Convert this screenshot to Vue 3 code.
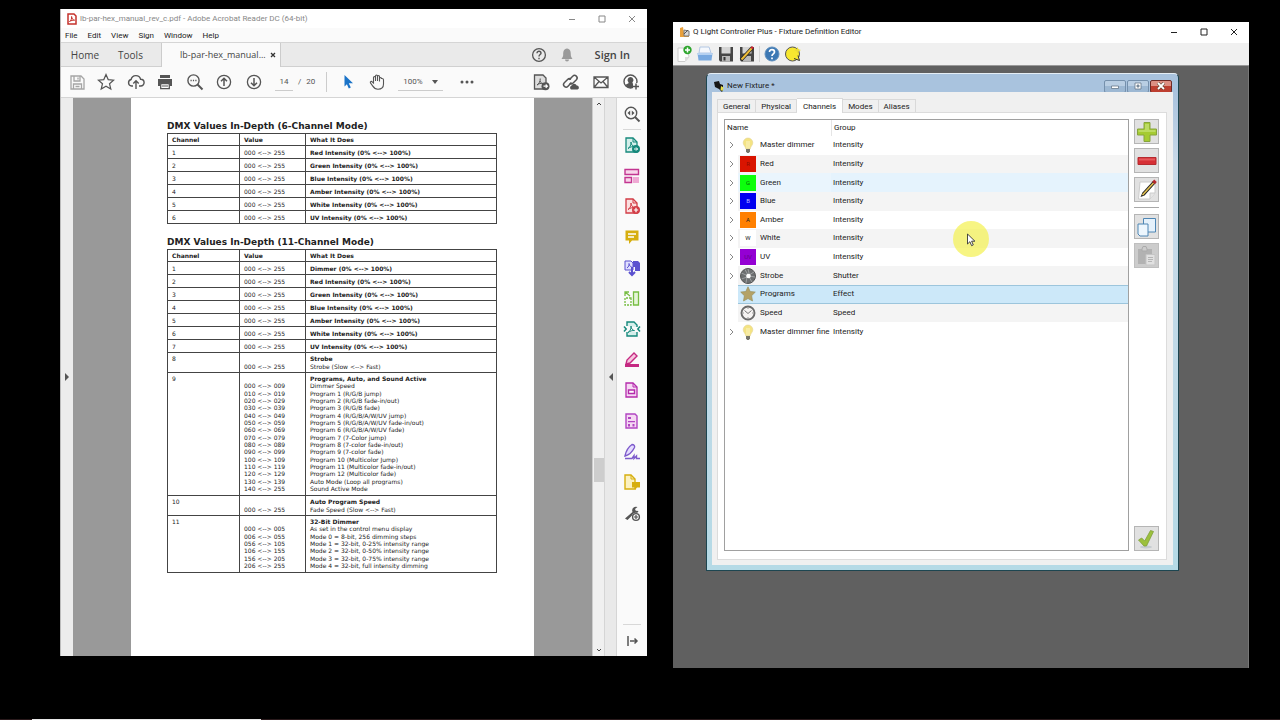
<script setup>
import { ref } from 'vue'

const page = ref('14')
const zoomLevel = ref('100%')
const menus = ['File', 'Edit', 'View', 'Sign', 'Window', 'Help']

const sixChannel = ['Red', 'Green', 'Blue', 'Amber', 'White', 'UV'].map((c, i) => ({
  n: i + 1,
  value: '000 <--> 255',
  text: `${c} Intensity (0% <--> 100%)`,
}))

const elevenChannel = ['Dimmer', 'Red Intensity', 'Green Intensity', 'Blue Intensity', 'Amber Intensity', 'White Intensity', 'UV Intensity'].map((c, i) => ({
  n: i + 1,
  value: '000 <--> 255',
  text: `${c} (0% <--> 100%)`,
}))

const detailed = [
  { n: 8, size: 'two', title: 'Strobe', lines: [['000 <--> 255', 'Strobe (Slow <--> Fast)']] },
  {
    n: 9,
    size: 'sixteen',
    title: 'Programs, Auto, and Sound Active',
    lines: [
      ['000 <--> 009', 'Dimmer Speed'],
      ['010 <--> 019', 'Program 1 (R/G/B jump)'],
      ['020 <--> 029', 'Program 2 (R/G/B fade-in/out)'],
      ['030 <--> 039', 'Program 3 (R/G/B fade)'],
      ['040 <--> 049', 'Program 4 (R/G/B/A/W/UV jump)'],
      ['050 <--> 059', 'Program 5 (R/G/B/A/W/UV fade-in/out)'],
      ['060 <--> 069', 'Program 6 (R/G/B/A/W/UV fade)'],
      ['070 <--> 079', 'Program 7 (7-Color jump)'],
      ['080 <--> 089', 'Program 8 (7-color fade-in/out)'],
      ['090 <--> 099', 'Program 9 (7-color fade)'],
      ['100 <--> 109', 'Program 10 (Multicolor Jump)'],
      ['110 <--> 119', 'Program 11 (Multicolor fade-in/out)'],
      ['120 <--> 129', 'Program 12 (Multicolor fade)'],
      ['130 <--> 139', 'Auto Mode (Loop all programs)'],
      ['140 <--> 255', 'Sound Active Mode'],
    ],
  },
  { n: 10, size: 'two', title: 'Auto Program Speed', lines: [['000 <--> 255', 'Fade Speed (Slow <--> Fast)']] },
  {
    n: 11,
    size: 'seven',
    title: '32-Bit Dimmer',
    lines: [
      ['000 <--> 005', 'As set in the control menu display'],
      ['006 <--> 055', 'Mode 0 = 8-bit, 256 dimming steps'],
      ['056 <--> 105', 'Mode 1 = 32-bit, 0-25% intensity range'],
      ['106 <--> 155', 'Mode 2 = 32-bit, 0-50% intensity range'],
      ['156 <--> 205', 'Mode 3 = 32-bit, 0-75% intensity range'],
      ['206 <--> 255', 'Mode 4 = 32-bit, full intensity dimming'],
    ],
  },
]

const fileTools = [
  { label: 'Save', art: '<g fill="none" stroke="#a5a5a5" stroke-width="1.3"><path d="M3 3h10l3 3v10H3z"/><path d="M6 3v5h6V3M5.500 16v-5h8v5M10 4.500v2M7.500 13.500h4"/></g>' },
  { label: 'Star', art: '<path d="M9 1.600l2.200 5 5.400.5-4.100 3.600 1.300 5.400L9 13.300l-4.800 2.800 1.300-5.400L1.400 7.100l5.400-.5z" fill="none" stroke="#555" stroke-width="1.200"/>' },
  { label: 'Upload', art: '<path d="M6 13H4.600a3.300 3.300 0 0 1-.5-6.500 4.900 4.900 0 0 1 9.500-.3 3.400 3.400 0 0 1 .2 6.800H12M9 16V8M6.300 10.500L9 7.800l2.700 2.700" fill="none" stroke="#555" stroke-width="1.400"/>' },
  { label: 'Print', art: '<g fill="#555"><path d="M4 2h10v3H4zM2 6h14v7h-2v-3H4v3H2z"/><path d="M4.700 10.700h8.600v5H4.700z" fill="#fff" stroke="#555" stroke-width="1.300"/><path d="M6 12.500h6v1H6z"/></g>' },
  { label: 'Find', art: '<circle cx="7.500" cy="7.500" r="5.600" fill="none" stroke="#555" stroke-width="1.400"/><path d="M11.500 11.500l5 5" stroke="#555" stroke-width="2"/><path d="M4.500 7.500h1.200m1.200 0h1.200m1.200 0h1.200" stroke="#555" stroke-width="1.300"/>' },
  { label: 'Previous page', art: '<circle cx="9" cy="9" r="6.600" fill="none" stroke="#555" stroke-width="1.300"/><path d="M9 13V5.500M6 8.300l3-3 3 3" fill="none" stroke="#555" stroke-width="1.500"/>' },
  { label: 'Next page', art: '<circle cx="9" cy="9" r="6.600" fill="none" stroke="#555" stroke-width="1.300"/><path d="M9 5v7.500M6 9.700l3 3 3-3" fill="none" stroke="#555" stroke-width="1.500"/>' },
]

const shareTools = [
  { label: 'Convert PDF', art: '<path d="M2.500 2h8.500l3 3v11H2.500z" fill="#ddd" stroke="#555" stroke-width="1.300"/><path d="M5 12c2-1 3.500-4 3.200-6.500M8 8c.8 2 2 2.800 4 2.800M5 12c1.500-1.300 4-2 6-1.600" fill="none" stroke="#555"/><circle cx="13.500" cy="13.200" r="4" fill="#555"/><path d="M11.500 13.200h3.600M13.700 11.500l1.700 1.700-1.700 1.700" fill="none" stroke="#fff" stroke-width="1.200"/>' },
  { label: 'Share link', art: '<g fill="none" stroke="#555" stroke-width="1.500"><path d="M7.200 6.800l3.500-3.600a2.500 2.500 0 0 1 3.700 3.500l-3.300 3.300a2.500 2.500 0 0 1-3.400.1"/><path d="M9.500 9.600L6 13.300a2.500 2.500 0 0 1-3.700-3.500l3.300-3.300a2.500 2.500 0 0 1 3.400-.1"/></g><path d="M9 16.500a2.200 2.200 0 0 1 .6-3.900 2.700 2.700 0 0 1 5.100 0 2 2 0 0 1 .8 3.900z" fill="#555"/>' },
  { label: 'Email', art: '<path d="M2 4h14v10.500H2zM2 4l7 6 7-6M2 14.500l5-6M16 14.500l-5-6" fill="none" stroke="#555" stroke-width="1.300"/>' },
  { label: 'Add people', art: '<circle cx="8.500" cy="8.500" r="6.500" fill="#fff" stroke="#555" stroke-width="1.400"/><path d="M8.500 4a3 3 0 0 1 2 5.200v1l3 1.500-2 2.500c-2 1-4.500 1-6.300-.2l-1.700-2.200 3-1.600v-1A3 3 0 0 1 8.500 4z" fill="#555"/><path d="M11 10h6v7h-6z" fill="#fafafa"/><path d="M14 10.500v6M11 13.500h6" stroke="#555" stroke-width="1.500"/>' },
]

const sheet = (c, f) => `<path d="M3 2h7l4 4v10H3z" fill="${f}" stroke="${c}" stroke-width="1.300"/><path d="M10 2v4h4" fill="none" stroke="${c}"/>`
const acro = (c) => `<path d="M5 12.500c1.700-.8 3.300-3.500 3-6.500.3 2.700 1.300 4.300 3.500 4.600-2-.3-4.500.4-6.500 1.900z" fill="none" stroke="${c}"/>`
const paneTools = [
  { label: 'Export PDF', art: sheet('#16897c', '#d5efeb') + acro('#16897c') + '<circle cx="13" cy="13" r="4" fill="#16897c"/><path d="M11 13h3.500M13 11.400l1.600 1.600-1.600 1.600" fill="none" stroke="#fff"/>' },
  { label: 'Organize pages', art: '<g fill="#f8d5ea" stroke="#c33591" stroke-width="1.400"><path d="M2 2.500h13.500v5H2zM2 10.500h6.500v5H2z"/></g><path d="M10 10h6v6h-6z" fill="#efa9d4"/>' },
  { label: 'Create PDF', art: sheet('#d23c46', '#fbe0e0') + acro('#d23c46') + '<circle cx="13" cy="13" r="4" fill="#d23c46"/><path d="M13 10.800v4.400M10.800 13h4.400" stroke="#fff" stroke-width="1.200"/>' },
  { label: 'Comment', art: '<path d="M2.500 2.500h13v10H9l-3 3.500v-3.500H2.500z" fill="#d6ae0f"/><path d="M5 6h8M5 9h6" stroke="#fff" stroke-width="1.400"/>' },
  { label: 'Combine files', art: '<path d="M2 2h6l2 2v7H2z" fill="#e1e0ff" stroke="#5b51cf"/><path d="M4 9c1.500-1 2.500-3 2-4.500.3 2 1 3 2.500 3.200" fill="none" stroke="#5b51cf"/><path d="M10 2h5l2 2v8h-5V8h-2z" fill="#5b51cf"/><path d="M9 8v7M6 13l3 3 3-3" fill="none" stroke="#5b51cf" stroke-width="2"/>' },
  { label: 'Edit PDF', art: '<g fill="none" stroke="#77bd43" stroke-width="1.300"><path d="M10.500 3h5v13h-5z" fill="#e5f5d8"/><path d="M8 9H2v7h6z" stroke-dasharray="2 1"/><path d="M2 7V3h4M2 3l5 4"/></g>' },
  { label: 'Compress PDF', art: '<path d="M4 6V2h7l3 3v2M4 12v4h10v-4" fill="#d5efeb" stroke="#16897c" stroke-width="1.400"/>' + acro('#16897c') + '<path d="M1 6.500L3.200 9 1 11.500M17 6.500L14.800 9l2.200 2.500" fill="none" stroke="#16897c" stroke-width="1.500"/>' },
  { label: 'Fill and sign', art: '<path d="M3 13l1-4 7-7 3 3-7 7z" fill="#f8c5df" stroke="#c52a82" stroke-width="1.400"/><path d="M2 13h14v3H2z" fill="#c52a82"/>' },
  { label: 'Redact', art: sheet('#b52bac', '#f5d8f3') + '<path d="M5.500 9h6v3.500h-6z" fill="#fff" stroke="#b52bac" stroke-width="1.400"/>' },
  { label: 'Prepare form', art: '<path d="M3 2h9l2 2v12H3z" fill="#f5d8f3" stroke="#b145c2" stroke-width="1.400"/><path d="M5 5h3v2H5zM5 9h7v1.200H5zM5 12h2v2.500H5zM9.500 12h2v2.500h-2z" fill="#b145c2"/>' },
  { label: 'Certificates', art: '<path d="M2 13c1-5 4-9.500 7-11.500 2 0 3 1.500 2.500 3C9.500 8.500 6 12 2 13z" fill="#e5dcff" stroke="#7d5acb" stroke-width="1.400"/><path d="M2 15.500h7l2-3v3l2.500-2.500v2.500H17" fill="none" stroke="#7d5acb" stroke-width="1.400"/>' },
  { label: 'Send for comments', art: '<path d="M2 2h6l4 4v10H2z" fill="#fbf1c1" stroke="#d6ae0f" stroke-width="1.400"/><path d="M8 2v4h4" fill="none" stroke="#d6ae0f"/><path d="M9 9h8v5.500h-3L12 17v-2.500H9z" fill="#d6ae0f"/>' },
  { label: 'More tools', art: '<path d="M2 14.500L9.500 8a3.800 3.800 0 0 1 5-5L12 5l.8 1.800L15.500 7c-.7 2-2.500 3-4.500 2.500L4.500 16z" fill="#555"/><circle cx="13" cy="13" r="4.300" fill="#fafafa"/><circle cx="13" cy="13" r="3.400" fill="none" stroke="#555" stroke-width="1.400"/><path d="M13 11v4M11 13h4" stroke="#555" stroke-width="1.200"/>' },
]

const editorTabs = ['General', 'Physical', 'Channels', 'Modes', 'Aliases']
const activeTab = ref('Channels')

const channels = [
  { name: 'Master dimmer', group: 'Intensity', icon: 'bulb', tree: true },
  { name: 'Red', group: 'Intensity', icon: 'swatch', letter: 'R', tone: 'red', tree: true },
  { name: 'Green', group: 'Intensity', icon: 'swatch', letter: 'G', tone: 'green', tree: true, state: 'hover' },
  { name: 'Blue', group: 'Intensity', icon: 'swatch', letter: 'B', tone: 'blue', tree: true },
  { name: 'Amber', group: 'Intensity', icon: 'swatch', letter: 'A', tone: 'amber', tree: true },
  { name: 'White', group: 'Intensity', icon: 'swatch', letter: 'W', tone: 'white', tree: true },
  { name: 'UV', group: 'Intensity', icon: 'swatch', letter: 'UV', tone: 'uv', tree: true },
  { name: 'Strobe', group: 'Shutter', icon: 'shutter', tree: true },
  { name: 'Programs', group: 'Effect', icon: 'star', state: 'selected' },
  { name: 'Speed', group: 'Speed', icon: 'clock' },
  { name: 'Master dimmer fine', group: 'Intensity', icon: 'bulb', tree: true },
]
</script>

<template>
  <div class="screen">
    <main class="desktop">
      <section class="reader" aria-label="Adobe Acrobat Reader">
        <header class="titlebar">
          <svg class="app-icon" viewBox="0 0 10 12"><path d="M1 1h6l2 2v8H1z" fill="#fff" stroke="#c5322c" stroke-width="1.500" /><path d="M2.500 8.500C4 7.500 5 5.500 4.600 3.500c.2 2 1 3.500 3 3.700-1.600-.2-3.500.3-5.100 1.300z" fill="none" stroke="#c5322c" /></svg>
          <h1 class="caption">lb-par-hex_manual_rev_c.pdf - Adobe Acrobat Reader DC (64-bit)</h1>
          <div class="win-buttons">
            <button aria-label="Minimize"><svg viewBox="0 0 8 8"><path d="M1 4.500h6" /></svg></button>
            <button aria-label="Maximize"><svg viewBox="0 0 8 8"><path d="M1 1h6v6H1z" /></svg></button>
            <button aria-label="Close"><svg viewBox="0 0 8 8"><path d="M1 1l6 6M7 1L1 7" /></svg></button>
          </div>
        </header>
        <nav class="menubar"><button v-for="m in menus" :key="m">{{ m }}</button></nav>
        <div class="tabbar">
          <button class="main-tab">Home</button>
          <button class="main-tab">Tools</button>
          <div class="doc-tab"><button>lb-par-hex_manual...</button><button class="tab-close" aria-label="Close tab"><svg viewBox="0 0 6 6"><path d="M1 1l4 4M5 1L1 5" /></svg></button></div>
          <div class="account">
            <button aria-label="Help"><svg viewBox="0 0 18 18"><circle cx="9" cy="9" r="6.400" fill="none" stroke="#555" stroke-width="1.300" /><path d="M7 7.200c0-2.600 4-2.500 4 0C11 8.600 9 8.600 9 10.400M9 11.800v1.400" fill="none" stroke="#555" stroke-width="1.400" /></svg></button>
            <button aria-label="Notifications"><svg viewBox="0 0 18 18"><path d="M9 2.500c3.200.5 3.800 2.500 3.800 6 0 2 .5 2.800 1.700 4.500h-11c1.200-1.700 1.700-2.500 1.700-4.500 0-3.500.6-5.500 3.800-6zM7 13.600h4a2 2 0 0 1-4 0z" fill="#9a9a9a" /></svg></button>
            <button class="sign-in">Sign In</button>
          </div>
        </div>
        <div class="toolbar">
          <div class="file-tools">
            <button v-for="t in fileTools" :key="t.label" :aria-label="t.label"><svg viewBox="0 0 18 18" v-html="t.art" /></button>
          </div>
          <div class="pager">
            <input v-model="page" aria-label="Page number" /><span>/</span><span>20</span>
          </div>
          <div class="view-tools">
            <button aria-label="Select"><svg viewBox="0 0 18 18"><path d="M5.500 2l8.500 8.300H9.800l2 4.200-2 .9-1.900-4.200L5.500 13.500z" fill="#1a73c8" /></svg></button>
            <button aria-label="Hand"><svg viewBox="0 0 18 18"><path d="M5.500 10V4.500c0-1.300 2-1.300 2 0V8 3c0-1.300 2-1.300 2 0v5-4.500c0-1.300 2-1.300 2 0V8.500 5.500c0-1.300 2-1.300 2 0l.5 0c1 0 1.500.4 1.500 1.300V11c0 3.300-2 5.200-5.500 5.200-3 0-4-1-5.400-3.300L2.400 9.800C2 8.500 3.500 8 4.200 8.900z" fill="none" stroke="#555" stroke-width="1.100" /></svg></button>
          </div>
          <label class="zoom"><select v-model="zoomLevel" aria-label="Zoom level"><option>100%</option></select><svg viewBox="0 0 6 4"><path d="M0 0h6L3 4z" fill="#555" /></svg></label>
          <button class="more" aria-label="More"><svg viewBox="0 0 14 4"><circle cx="2" cy="2" r="1.500" /><circle cx="7" cy="2" r="1.500" /><circle cx="12" cy="2" r="1.500" /></svg></button>
          <div class="share-tools">
            <button v-for="t in shareTools" :key="t.label" :aria-label="t.label"><svg viewBox="0 0 18 18" v-html="t.art" /></button>
          </div>
        </div>
        <div class="workspace">
          <button class="side-strip left" aria-label="Show navigation pane"><svg viewBox="0 0 4 8"><path d="M0 0l4 4-4 4z" /></svg></button>
          <div class="canvas">
            <article class="sheet">
              <h2>DMX Values In-Depth (6-Channel Mode)</h2>
              <table class="dmx">
                <thead><tr><th class="c1">Channel</th><th class="c2">Value</th><th>What It Does</th></tr></thead>
                <tbody>
                  <tr v-for="r in sixChannel" :key="r.n"><td>{{ r.n }}</td><td>{{ r.value }}</td><td><b>{{ r.text }}</b></td></tr>
                </tbody>
              </table>
              <h2>DMX Values In-Depth (11-Channel Mode)</h2>
              <table class="dmx">
                <thead><tr><th class="c1">Channel</th><th class="c2">Value</th><th>What It Does</th></tr></thead>
                <tbody>
                  <tr v-for="r in elevenChannel" :key="r.n"><td>{{ r.n }}</td><td>{{ r.value }}</td><td><b>{{ r.text }}</b></td></tr>
                  <tr v-for="r in detailed" :key="r.n" class="detail">
                    <td>{{ r.n }}</td>
                    <td><div class="lines" :class="r.size"><span class="blank"></span><span v-for="l in r.lines" :key="l[0]">{{ l[0] }}</span></div></td>
                    <td><div class="lines" :class="r.size"><b>{{ r.title }}</b><span v-for="l in r.lines" :key="l[0]">{{ l[1] }}</span></div></td>
                  </tr>
                </tbody>
              </table>
            </article>
          </div>
          <div class="scrollbar">
            <svg viewBox="0 0 6 4"><path d="M1 3l2-2 2 2" /></svg>
            <div class="thumb"></div>
            <svg viewBox="0 0 6 4"><path d="M1 1l2 2 2-2" /></svg>
          </div>
          <button class="side-strip right" aria-label="Hide tools pane"><svg viewBox="0 0 4 8"><path d="M4 0L0 4l4 4z" /></svg></button>
          <aside class="pane">
            <button aria-label="Search tools"><svg viewBox="0 0 18 18"><circle cx="8" cy="8" r="5.700" fill="none" stroke="#555" stroke-width="1.400" /><path d="M12 12l4.500 4.500" stroke="#555" stroke-width="2" /><path d="M7.200 5.500v5L4.500 8zM8.800 5.500v5L11.500 8z" fill="#555" /></svg></button>
            <hr />
            <div class="pane-list">
              <button v-for="t in paneTools" :key="t.label" :aria-label="t.label"><svg viewBox="0 0 18 18" v-html="t.art" /></button>
            </div>
            <hr class="low" />
            <button aria-label="Collapse pane"><svg viewBox="0 0 18 18"><path d="M5 4v10M7 9h7M11.500 6.500L14 9l-2.500 2.500" fill="none" stroke="#555" stroke-width="1.500" /></svg></button>
          </aside>
        </div>
      </section>

      <section class="editor" aria-label="Fixture Definition Editor">
        <header class="titlebar dark">
          <svg class="app-icon wide" viewBox="0 0 12 12"><path d="M1 2l3-1 1 6 5 1v3H1z" fill="#e9a03a" /><path d="M5 4l5 1v5H5z" fill="#d8d8d8" stroke="#777" /><path d="M5 8l4-4" stroke="#555" /></svg>
          <h1 class="caption">Q Light Controller Plus - Fixture Definition Editor</h1>
          <div class="win-buttons">
            <button aria-label="Minimize"><svg viewBox="0 0 8 8"><path d="M1 4.500h6" /></svg></button>
            <button aria-label="Maximize"><svg viewBox="0 0 8 8"><path d="M1 1h6v6H1z" /></svg></button>
            <button aria-label="Close"><svg viewBox="0 0 8 8"><path d="M1 1l6 6M7 1L1 7" /></svg></button>
          </div>
        </header>
        <div class="quickbar">
          <button aria-label="New"><svg viewBox="0 0 18 18"><path d="M3 3h9l2 9-4 4.500H3z" fill="#fdfdfd" stroke="#ccc" /><path d="M14 12l-4 4.500V12z" fill="#ddd" /><circle cx="12.500" cy="5" r="4.200" fill="#2da52d" /><path d="M12.500 2.500v5M10 5h5" stroke="#fff" stroke-width="1.500" /></svg></button>
          <button aria-label="Open"><svg viewBox="0 0 18 18"><path d="M4 2h9l2 6H3z" fill="#f5f8fd" stroke="#b4c8e4" /><path d="M1.500 8h15l-1 7.500h-13z" fill="#79a9e0" /><path d="M2 8h14v2H2z" fill="#b6d1f1" /></svg></button>
          <button aria-label="Save"><svg viewBox="0 0 18 18"><path d="M2 2h14v14.500H3L2 15z" fill="#454545" /><path d="M4.500 2h9v6.500h-9z" fill="#d5d5d5" /><path d="M5 11h8v5.500H5z" fill="#b9b9b9" /><path d="M6.500 12h2v3.500h-2z" fill="#333" /></svg></button>
          <button aria-label="Save as"><svg viewBox="0 0 18 18"><path d="M2 2h14v14.500H3L2 15z" fill="#454545" /><path d="M4.500 2h9v6.500h-9z" fill="#d5d5d5" /><path d="M5 11h8v5.500H5z" fill="#b9b9b9" /><path d="M3 15L14.500 2.500" stroke="#222" stroke-width="3.400" /><path d="M3.500 14.500L14 3" stroke="#edbb36" stroke-width="2" /><path d="M13.500 3.500l1.500-1.700" stroke="#c23" stroke-width="2.500" /></svg></button>
          <span class="sep"></span>
          <button aria-label="Help"><svg viewBox="0 0 18 18"><circle cx="9" cy="9" r="7" fill="#3c78b4" stroke="#5f8fbd" /><path d="M6.500 7c0-3.300 5-3.200 5 0C11.500 8.900 9 8.800 9 11M9 12.500v1.700" fill="none" stroke="#fff" stroke-width="1.700" /></svg></button>
          <button aria-label="Colour"><svg viewBox="0 0 18 18"><circle cx="8.500" cy="9" r="7" fill="#f7e72f" stroke="#555" stroke-width="1" /><path d="M10 13.500l5.500 2-1.500-5" fill="#f7e72f" stroke="#333" /><path d="M13.500 2l1 2.200 2.500.8-2.500 1.200-1 2.300-1-2.300L10 5l2.500-.8z" fill="#eadb36" /></svg></button>
        </div>
        <div class="mdi">
          <section class="fixture" aria-label="New Fixture">
            <header class="fix-title">
              <svg class="app-icon wide" viewBox="0 0 12 12"><path d="M1 2l5-1 1 3 3 1v5L9 12 6 9 2 7z" fill="#161616" /><path d="M8 6l2.500 1.500-1 3.500-2-1z" fill="#e8e24a" /></svg>
              <h2>New Fixture *</h2>
              <div class="aero">
                <button aria-label="Minimize"><svg viewBox="0 0 10 8"><path d="M1.500 4h7v2.500h-7z" fill="#fff" stroke="#678" stroke-width=".8" /></svg></button>
                <button aria-label="Restore"><svg viewBox="0 0 10 8"><path d="M2 1h6v6H2z" fill="#fff" stroke="#678" stroke-width=".8" /><path d="M4 3h2v2H4z" fill="#9ab" stroke="#678" stroke-width=".8" /></svg></button>
                <button class="close" aria-label="Close"><svg viewBox="0 0 10 8"><path d="M2 1l6 6M8 1L2 7" stroke="#543" stroke-width="3" /><path d="M2 1l6 6M8 1L2 7" stroke="#fff" stroke-width="1.800" /></svg></button>
              </div>
            </header>
            <div class="client">
              <div class="tabs" role="tablist">
                <button v-for="t in editorTabs" :key="t" role="tab" :aria-selected="t === activeTab" :class="{ active: t === activeTab }" @click="activeTab = t">{{ t }}</button>
              </div>
              <div class="tab-page">
                <div class="list">
                  <table class="channels">
                    <thead><tr><th>Name</th><th class="group-head">Group</th></tr></thead>
                    <tbody>
                      <tr v-for="c in channels" :key="c.name" :class="c.state">
                        <td class="name">
                          <span class="twist"><svg v-if="c.tree" viewBox="0 0 5 8"><path d="M1 1l3 3-3 3" /></svg></span>
                          <span class="cell">
                            <svg v-if="c.icon === 'bulb'" class="pic" viewBox="0 0 16 16"><path d="M8 1a4.800 4.800 0 0 1 4.800 4.800c0 2.500-2.300 3.500-2.500 6H5.700c-.2-2.500-2.500-3.500-2.500-6A4.800 4.800 0 0 1 8 1z" fill="#f4e382" stroke="#e3d493" stroke-width=".6" /><path d="M7 4v7M9 4v7" stroke="#fbf4c4" /><path d="M6 12h4v2.500L8.800 16H7.200L6 14.500z" fill="#77766c" /></svg>
                            <svg v-else-if="c.icon === 'shutter'" class="pic" viewBox="0 0 16 16"><circle cx="8" cy="8" r="7.500" fill="#6c6f70" stroke="#555" /><g stroke="#a9acad" stroke-width=".8"><path d="M8 1l1.500 6M14 4l-5 3M15 9l-6-1M12 14l-3-5M6 15l1-6M1.500 11L7 9M1.500 5L7 7.500M5 1.500L8 7" /></g><circle cx="8.500" cy="8" r="2.300" fill="#fff" /></svg>
                            <svg v-else-if="c.icon === 'star'" class="pic" viewBox="0 0 16 16"><path d="M8 .8l2.200 4.700 5.100.6-3.700 3.600.9 5.300L8 12.500 3.500 15l.9-5.300L.7 6.100l5.100-.6z" fill="#b4a266" stroke="#99905f" stroke-width=".7" /></svg>
                            <svg v-else-if="c.icon === 'clock'" class="pic" viewBox="0 0 16 16"><circle cx="8" cy="8" r="6.500" fill="#f5f3f2" stroke="#6b6b6b" stroke-width="1.900" /><path d="M4.500 5.500L8 8.500l3.500-3" fill="none" stroke="#777" /><path d="M8 3v1M8 12v1M3 8h1M12 8h1" stroke="#999" /></svg>
                            <i v-else class="pic swatch" :class="c.tone">{{ c.letter }}</i>
                            {{ c.name }}
                          </span>
                        </td>
                        <td class="group">{{ c.group }}</td>
                      </tr>
                    </tbody>
                  </table>
                  <div class="pointer"><svg viewBox="0 0 10 14"><path d="M1.500 1v10l2.400-2.300 1.700 4 1.700-.8-1.700-3.700h3.300z" fill="#fff" stroke="#333" stroke-width=".9" /></svg></div>
                </div>
                <div class="actions">
                  <button aria-label="Add channel"><svg viewBox="0 0 22 22"><path d="M8 1.500h6V8h6.500v6H14v6.500H8V14H1.500V8H8z" fill="#a5cb32" stroke="#86a43c" /><path d="M9 3h4v6h6.500v2H2.500V9H9z" fill="#bcdb62" /></svg></button>
                  <button aria-label="Remove channel"><svg viewBox="0 0 22 22"><path d="M2 7.500h18v7H2z" fill="#d62f35" stroke="#b52a2f" /><path d="M3 8.500h16v2H3z" fill="#e5585b" /></svg></button>
                  <button aria-label="Edit channel"><svg viewBox="0 0 22 22"><path d="M4 3h15v11l-5 6H2.500z" fill="#fff" stroke="#ccc" /><path d="M14 20v-6h5" fill="#e5e5e5" stroke="#ccc" /><path d="M4.500 18l2-4.500L17 2l2.500 2.300L8.500 16.500z" fill="#222" /><path d="M6.500 16L17.500 4" stroke="#e5c250" stroke-width="1.600" /><path d="M17.500 4l2-2.200" stroke="#b5272d" stroke-width="3.500" /></svg></button>
                  <hr />
                  <button aria-label="Copy channel"><svg viewBox="0 0 22 22"><path d="M7.500 2.500h12V16H9l-1.500-1.500z" fill="#e5f1fb" stroke="#4e86b4" /><path d="M2 8h10v12H4l-2-2z" fill="#edf6fd" stroke="#4e86b4" /></svg></button>
                  <button class="disabled" aria-label="Paste channel" disabled><svg viewBox="0 0 22 22"><path d="M2 4h14v15H2z" fill="#b2b2b2" /><path d="M6 4l1-2.500h3L11 4v2H6z" fill="#ccc" stroke="#aaa" /><path d="M10 9.500h9v10.500h-9z" fill="#e1e1e1" stroke="#c5c5c5" /><path d="M12 12.500h5M12 14.500h5M12 16.500h4" stroke="#b5b5b5" /></svg></button>
                  <button class="confirm" aria-label="Confirm"><svg viewBox="0 0 22 22"><ellipse cx="10" cy="19" rx="6" ry="1.500" fill="#c5cbd0" /><path d="M2.500 12l3.200-2 3 3L14.500 2.500l3 1L10.500 18H8z" fill="#9cc03c" stroke="#7f9f3a" stroke-width=".8" /></svg></button>
                </div>
              </div>
            </div>
          </section>
        </div>
      </section>
    </main>
    <footer class="timeline"><span class="played"></span></footer>
  </div>
</template>

<style>
html, body { margin: 0; background: #000; }
</style>

<style scoped>
* { box-sizing: border-box; }
button, input, select { font: inherit; color: inherit; border: 0; background: none; padding: 0; margin: 0; border-radius: 0; outline: 0; }
button { display: flex; align-items: center; justify-content: center; white-space: nowrap; }
h1, h2 { margin: 0; font-weight: 400; }
hr { border: 0; margin: 0; }
svg { display: block; flex: none; }

.screen { min-height: 100vh; display: flex; flex-direction: column; background: #000; font: 8px/12px Roboto, "Noto Sans", sans-serif; color: #222; }
.desktop { flex: 1; display: flex; gap: 26px; padding: 0 31px 0 60px; }
.reader { flex: 586 1 0; min-width: 0; margin: 9px 0 62px; display: flex; flex-direction: column; background: #fafafa; border-left: 1px solid #bbb; }
.editor { flex: 576 1 0; min-width: 0; margin: 22px 0 50px; display: flex; flex-direction: column; background: #606060; }

.titlebar { height: 19px; display: flex; align-items: center; padding: 0 11px 0 6px; background: #fff; color: #888; }
.titlebar.dark { height: 21px; padding-bottom: 2px; color: #222; }
.app-icon { width: 10px; height: 12px; margin-right: 3px; }
.app-icon.wide { width: 12px; margin-right: 2px; }
.caption { font-size: 8px; line-height: 12px; white-space: nowrap; }
.win-buttons { margin-left: auto; display: flex; gap: 22px; }
.win-buttons svg { width: 8px; height: 8px; fill: none; stroke: currentColor; stroke-width: 1; }

.menubar { height: 14px; display: flex; align-items: center; gap: 10px; padding: 1px 0 0 4px; background: #fafafa; }
.tabbar { height: 25px; display: flex; background: #eaeaea; border-top: 1px solid #d5d5d5; border-bottom: 1px solid #d0d0d0; font-family: "Open Sans", "Noto Sans", sans-serif; font-size: 10px; line-height: 14px; color: #444; }
.main-tab { width: 48px; }
.main-tab + .main-tab { width: 43px; }
.doc-tab { width: 120px; margin: 0 0 -1px 9px; display: flex; align-items: center; justify-content: space-between; padding: 0 1px 0 18px; background: #fafafa; border: solid #ccc; border-width: 0 1px; font-size: 9px; }
.tab-close { width: 12px; height: 12px; }
.tab-close svg { width: 6px; height: 6px; stroke: #333; stroke-width: 1.300; }
.account { margin-left: auto; display: flex; align-items: center; gap: 10px; padding-right: 17px; }
.account svg { width: 18px; height: 18px; }
.sign-in { margin-left: 9px; font-size: 11px; font-weight: 600; }

.toolbar { height: 31px; display: flex; align-items: center; background: #fafafa; border-bottom: 1px solid #d5d5d5; color: #555; }
.toolbar button { height: 24px; }
.toolbar svg, .pane svg { width: 18px; height: 18px; }
.file-tools { width: 206px; display: flex; justify-content: space-between; margin-left: 1px; }
.file-tools button, .view-tools button, .share-tools button { width: 29px; }
.pager { display: flex; align-items: center; gap: 5px; padding-right: 11px; margin-left: 7px; border-right: 1px solid #ccc; height: 20px; }
.pager input { width: 18px; height: 18px; text-align: center; border-bottom: 1px solid #ccc; }
.view-tools { display: flex; margin-left: 6px; }
.zoom { display: flex; align-items: center; width: 45px; height: 18px; margin-left: 7px; padding-left: 5px; border-bottom: 1px solid #ccc; }
.toolbar .zoom svg { width: 6px; height: 4px; }
.zoom select { appearance: none; width: 29px; }
.more { margin-left: 17px; }
.toolbar .more svg { width: 14px; height: 4px; fill: #555; }
.share-tools { margin-left: auto; display: flex; gap: 1px; padding-right: 2px; }

.workspace { flex: 1; display: flex; min-height: 0; }
.side-strip { width: 12px; background: #ececec; }
.side-strip.right { width: 13px; background: #e9e9e9; border: solid #d5d5d5; border-width: 0 1px; }
.side-strip svg { width: 4px; height: 8px; fill: #555; }
.canvas { flex: 1; min-width: 0; background: #999; display: flex; justify-content: center; overflow: hidden; }
.sheet { width: 403px; flex: none; background: #fff; padding: 22px 37px 0 36px; font: 6px/7px "DejaVu Sans", Verdana, sans-serif; color: #222; }
.sheet h2 { font-size: 9px; line-height: 13px; font-weight: 700; white-space: nowrap; }
.dmx + h2 { margin-top: 12px; }
.dmx { width: 100%; table-layout: fixed; border-collapse: collapse; }
.dmx th { height: 12px; text-align: left; }
.dmx td { height: 13px; }
.dmx th, .dmx td { padding: 0 4px; border: 1px solid #444; vertical-align: middle; white-space: nowrap; }
.dmx .c1 { width: 72px; }
.dmx .c2 { width: 66px; }
.dmx .detail td { vertical-align: top; padding-top: 2px; }
.lines { display: flex; flex-direction: column; justify-content: space-between; }
.lines .blank { height: 7px; }
.two { height: 15px; margin-bottom: 2px; }
.sixteen { height: 117px; margin-bottom: 3px; }
.seven { height: 51px; margin-bottom: 3px; }

.scrollbar { width: 12px; background: #f0f0f0; border-left: 1px solid #ccc; display: flex; flex-direction: column; align-items: center; padding: 4px 0; }
.scrollbar svg { width: 6px; height: 4px; fill: none; stroke: #444; stroke-width: 1; }
.scrollbar svg:last-child { margin-top: auto; }
.thumb { width: 10px; height: 24px; margin-top: 352px; background: #cdcdcd; }
.pane { width: 30px; display: flex; flex-direction: column; align-items: stretch; background: #fafafa; }
.pane > button { height: 31px; }
.pane hr { height: 1px; margin: 0 6px; background: #d8d8d8; }
.pane hr.low { margin-top: auto; }
.pane-list { height: 398px; display: flex; flex-direction: column; justify-content: space-between; }
.pane-list button { height: 30px; }

.quickbar { height: 23px; display: flex; align-items: center; gap: 3px; padding: 0 0 1px 2px; background: #f0f0f0; border-bottom: 1px solid #999; }
.quickbar svg { width: 18px; height: 18px; }
.quickbar .sep { width: 1px; height: 16px; background: #d5d5d5; }
.mdi { flex: 1; display: flex; padding: 7px 69px 97px 33px; background: #606060; border-right: 1px solid #777; }
.fixture { flex: 1; min-width: 0; display: flex; flex-direction: column; padding: 0 5px 5px; background: linear-gradient(#a9c3de 0, #a9c3de 18px, #c9d9e8 90px, #b5dae6 100%); border: 1px solid #1d4651; border-top-color: #e5eef5; border-radius: 5px 5px 0 0; }
.fix-title { height: 18px; display: flex; align-items: center; padding: 6px 1px 0; color: #222; }
.fix-title h2 { font-size: 8px; line-height: 12px; }
.aero { margin-left: auto; display: flex; gap: 1px; }
.aero button { width: 22px; height: 13px; border: 1px solid #7590ac; border-radius: 2px; background: linear-gradient(#b9cee3 50%, #9db8d3 50%); }
.aero .close { border-color: #6d2a26; background: linear-gradient(#dc8f83 50%, #bd3e30 50%); }
.aero svg { width: 10px; height: 8px; }

.client { flex: 1; display: flex; flex-direction: column; padding: 6px 6px 5px 5px; background: #f0f0f0; }
.tabs { height: 14px; display: flex; align-items: flex-end; }
.tabs button { height: 13px; padding: 1px 5px 0; border: solid #d9d9d9; border-width: 1px 1px 0 0; background: #f0f0f0; }
.tabs button:first-child { border-left-width: 1px; }
.tabs .active { height: 15px; margin-bottom: -1px; padding-inline: 6px; background: #fff; position: relative; }
.tab-page { flex: 1; display: flex; gap: 5px; padding: 6px 7px 8px 6px; background: #fff; border: 1px solid #dcdcdc; }
.list { flex: 1; min-width: 0; position: relative; border: 1px solid #a0a0a0; background: #fff; }
.channels { display: block; width: 100%; }
.channels thead { display: block; }
.channels tr { display: grid; grid-template-columns: 106px 1fr; min-height: 0; }
.channels th { height: 16px; font-weight: 400; text-align: left; padding: 0 0 0 2px; line-height: 16px; }
.channels .group-head { border-left: 1px solid #e5e5e5; }
.channels tbody { display: grid; grid-template-rows: repeat(11, 1fr); height: 205px; }
.channels td { display: flex; align-items: center; padding: 0; min-width: 0; white-space: nowrap; }
.twist { width: 13px; flex: none; height: 100%; display: flex; align-items: center; justify-content: center; }
.twist svg { width: 5px; height: 8px; fill: none; stroke: #888; stroke-width: 1; }
.cell { flex: 1; min-width: 0; height: 100%; display: flex; align-items: center; gap: 4px; padding-left: 2px; }
.channels .group { padding-left: 2px; }
tbody tr:nth-child(even) .cell, tbody tr:nth-child(even) .group { background: #f4f4f4; }
tbody tr.hover .cell, tbody tr.hover .group { background: #e5f3fd; }
tbody tr.selected .cell, tbody tr.selected .group { background: #cce8f9; border: solid #9cc5dc; border-width: 1px 0; }
tbody tr:nth-child(3).hover .cell { background: #eaf5fd; }
.pic { width: 16px; height: 16px; flex: none; }
.swatch { display: flex; align-items: center; justify-content: center; font-style: normal; font-size: 6px; line-height: 8px; color: #222; }
.red { background: #d91400; color: #8e0c00; }
.green { background: #0cff0c; color: #067006; }
.blue { background: #0000f0; color: #b9b9ff; }
.amber { background: #ff8000; }
.white { background: #fff; }
.uv { background: #9400d3; color: #5e0088; }
.pointer { position: absolute; right: 139px; top: 101px; width: 36px; height: 36px; border-radius: 50%; background: rgba(244, 242, 90, .75); }
.pointer svg { width: 10px; height: 14px; margin: 12px 0 0 13px; }
.actions { width: 25px; display: flex; flex-direction: column; gap: 4px; }
.actions button { width: 25px; height: 25px; border: 1px solid #b5b5b5; background: #e1e1e1; }
.actions .disabled { background: #ccc; border-color: #bfbfbf; }
.actions svg { width: 22px; height: 22px; }
.actions hr { height: 1px; margin: 1px 0 2px; background: #a8a8a8; }
.actions .confirm { margin-top: auto; }

.timeline { height: 2px; display: flex; align-items: flex-end; padding-left: 32px; border-bottom: 1px solid #2a1a1c; }
.played { width: 229px; height: 1px; margin-bottom: -1px; background: #e8e8e8; }
</style>
